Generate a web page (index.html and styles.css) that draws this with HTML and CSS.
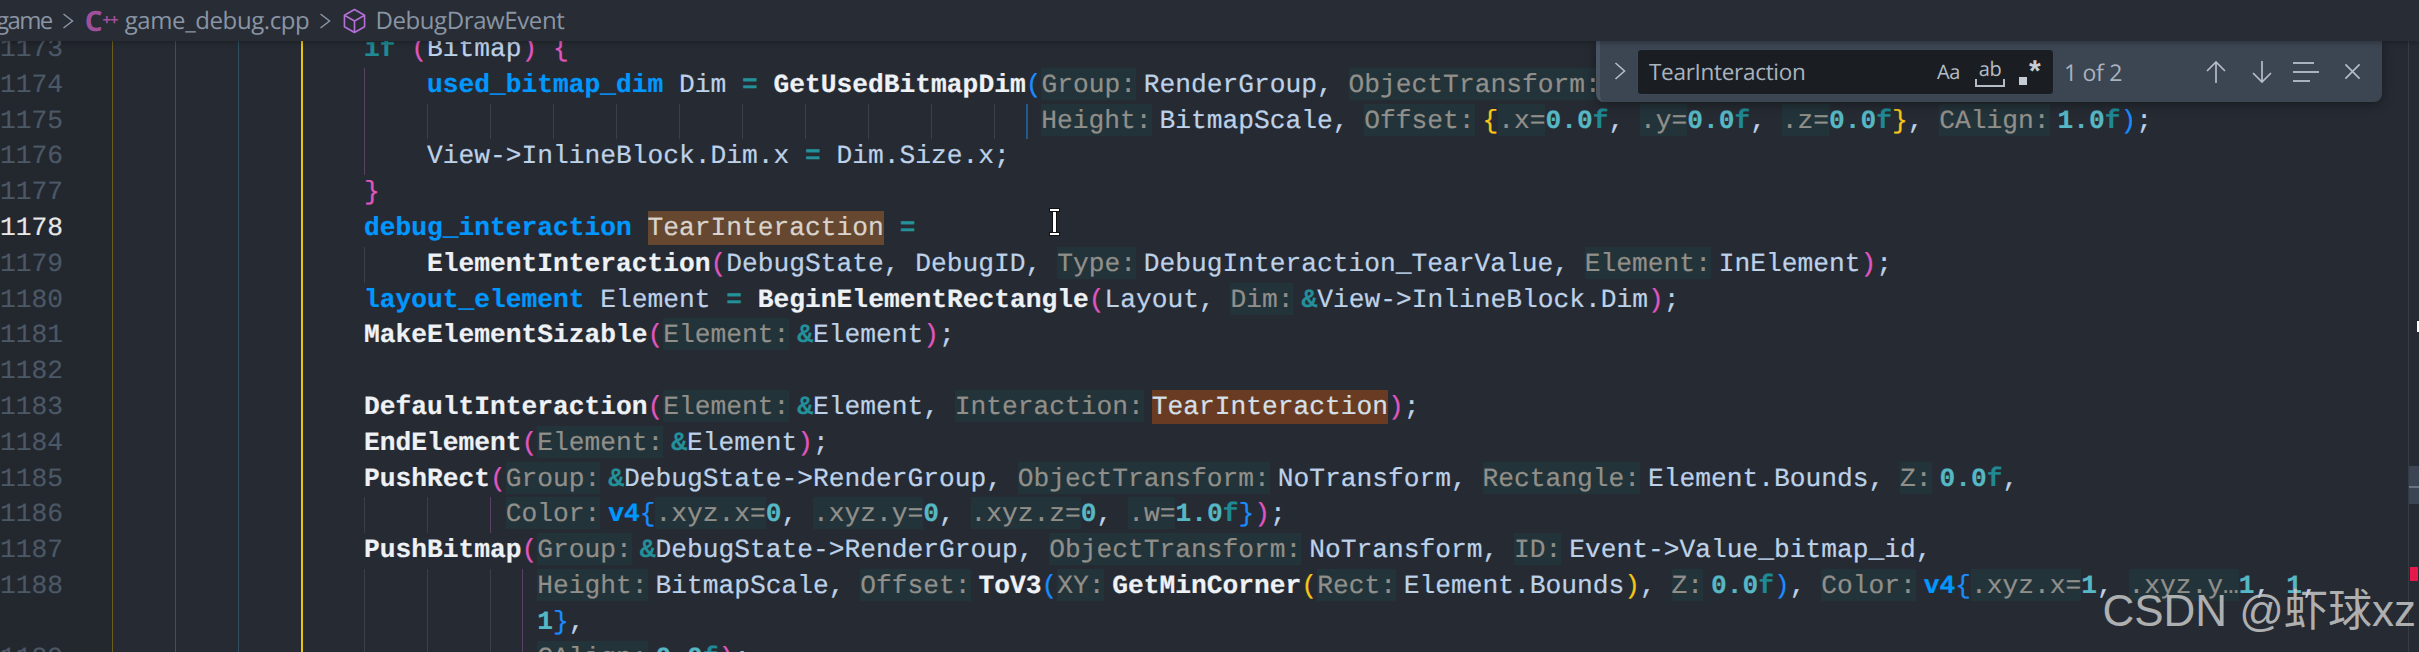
FILE: index.html
```html
<!DOCTYPE html>
<html lang="en">
<head>
<meta charset="utf-8">
<title>game_debug.cpp</title>
<link rel="stylesheet" href="styles.css">
</head>
<body>
<div class="app">
  <nav class="crumbs">
    <span class="crumb first">game</span>
    <svg class="sep" viewBox="0 0 12 16"><path d="M1.5 1 L10.5 8 L1.5 15"/></svg>
    <span class="cpp"><b>C</b><i>++</i></span>
    <span class="crumb">game_debug.cpp</span>
    <svg class="sep" viewBox="0 0 12 16"><path d="M1.5 1 L10.5 8 L1.5 15"/></svg>
    <svg class="cube" viewBox="0 0 24 27"><path d="M12 1.5 L22.5 7.5 V19.5 L12 25.5 L1.5 19.5 V7.5 Z M1.5 7.5 L12 13.5 L22.5 7.5 M12 13.5 V25.5"/></svg>
    <span class="crumb">DebugDrawEvent</span>
  </nav>
  <main class="editor">
    <div class="lines">
      <div class="row"><span class="num">1173</span><span class="ind"></span><span class="t"><span class="kw">if</span> <span class="pk">(</span>Bitmap<span class="pk">)</span> <span class="pk">{</span></span></div>
      <div class="row"><span class="num">1174</span><span class="ind"><i class="g pur"></i></span><span class="t"><b class="ty">used_bitmap_dim</b> Dim <b class="op">=</b> <b class="fn">GetUsedBitmapDim</b><span class="bl">(</span><span class="h c">Group:</span>RenderGroup, <span class="h c">ObjectTransform:</span></span></div>
      <div class="row"><span class="num">1175</span><span class="ind"><i class="g pur"></i><i class="g"></i><i class="g"></i><i class="g"></i><i class="g"></i><i class="g"></i><i class="g"></i><i class="g"></i><i class="g"></i><i class="g"></i><i class="g half"></i><i class="g q blu"></i></span><span class="t"><span class="h c">Height:</span>BitmapScale, <span class="h c">Offset:</span><span class="ye">{</span><span class="h">.x=</span><b class="n">0.0<u>f</u></b>, <span class="h">.y=</span><b class="n">0.0<u>f</u></b>, <span class="h">.z=</span><b class="n">0.0<u>f</u></b><span class="ye">}</span>, <span class="h c">CAlign:</span><b class="n">1.0<u>f</u></b><span class="bl">)</span>;</span></div>
      <div class="row"><span class="num">1176</span><span class="ind"><i class="g pur"></i></span><span class="t">View-&gt;InlineBlock.Dim.x <b class="op">=</b> Dim.Size.x;</span></div>
      <div class="row"><span class="num">1177</span><span class="ind"></span><span class="t"><span class="pk">}</span></span></div>
      <div class="row"><span class="num cur">1178</span><span class="ind"></span><span class="t"><b class="ty">debug_interaction</b> <span class="m">TearInteraction</span> <b class="op">=</b></span></div>
      <div class="row"><span class="num">1179</span><span class="ind"><i class="g"></i></span><span class="t"><b class="fn">ElementInteraction</b><span class="pk">(</span>DebugState, DebugID, <span class="h c">Type:</span>DebugInteraction_TearValue, <span class="h c">Element:</span>InElement<span class="pk">)</span>;</span></div>
      <div class="row"><span class="num">1180</span><span class="ind"></span><span class="t"><b class="ty">layout_element</b> Element <b class="op">=</b> <b class="fn">BeginElementRectangle</b><span class="pk">(</span>Layout, <span class="h c">Dim:</span><b class="op">&amp;</b>View-&gt;InlineBlock.Dim<span class="pk">)</span>;</span></div>
      <div class="row"><span class="num">1181</span><span class="ind"></span><span class="t"><b class="fn">MakeElementSizable</b><span class="pk">(</span><span class="h c">Element:</span><b class="op">&amp;</b>Element<span class="pk">)</span>;</span></div>
      <div class="row"><span class="num">1182</span><span class="ind"></span><span class="t"></span></div>
      <div class="row"><span class="num">1183</span><span class="ind"></span><span class="t"><b class="fn">DefaultInteraction</b><span class="pk">(</span><span class="h c">Element:</span><b class="op">&amp;</b>Element, <span class="h c">Interaction:</span><span class="m now">TearInteraction</span><span class="pk">)</span>;</span></div>
      <div class="row"><span class="num">1184</span><span class="ind"></span><span class="t"><b class="fn">EndElement</b><span class="pk">(</span><span class="h c">Element:</span><b class="op">&amp;</b>Element<span class="pk">)</span>;</span></div>
      <div class="row"><span class="num">1185</span><span class="ind"></span><span class="t"><b class="fn">PushRect</b><span class="pk">(</span><span class="h c">Group:</span><b class="op">&amp;</b>DebugState-&gt;RenderGroup, <span class="h c">ObjectTransform:</span>NoTransform, <span class="h c">Rectangle:</span>Element.Bounds, <span class="h c">Z:</span><b class="n">0.0<u>f</u></b>,</span></div>
      <div class="row"><span class="num">1186</span><span class="ind"><i class="g"></i><i class="g"></i><i class="g q pur"></i></span><span class="t"><span class="h c">Color:</span><b class="ty">v4</b><span class="bl">{</span><span class="h">.xyz.x=</span><b class="n">0</b>, <span class="h">.xyz.y=</span><b class="n">0</b>, <span class="h">.xyz.z=</span><b class="n">0</b>, <span class="h">.w=</span><b class="n">1.0<u>f</u></b><span class="bl">}</span><span class="pk">)</span>;</span></div>
      <div class="row"><span class="num">1187</span><span class="ind"></span><span class="t"><b class="fn">PushBitmap</b><span class="pk">(</span><span class="h c">Group:</span><b class="op">&amp;</b>DebugState-&gt;RenderGroup, <span class="h c">ObjectTransform:</span>NoTransform, <span class="h c">ID:</span>Event-&gt;Value_bitmap_id,</span></div>
      <div class="row"><span class="num">1188</span><span class="ind"><i class="g"></i><i class="g"></i><i class="g half"></i><i class="g q pur"></i></span><span class="t"><span class="h c">Height:</span>BitmapScale, <span class="h c">Offset:</span><b class="fn">ToV3</b><span class="bl">(</span><span class="h c">XY:</span><b class="fn">GetMinCorner</b><span class="ye">(</span><span class="h c">Rect:</span>Element.Bounds<span class="ye">)</span>, <span class="h c">Z:</span><b class="n">0.0<u>f</u></b><span class="bl">)</span>, <span class="h c">Color:</span><b class="ty">v4</b><span class="bl">{</span><span class="h">.xyz.x=</span><b class="n">1</b>, <span class="h">.xyz.y…</span><b class="n">1</b>, <b class="n">1</b>,</span></div>
      <div class="row"><span class="num"></span><span class="ind"><i class="g"></i><i class="g"></i><i class="g half"></i><i class="g q pur"></i></span><span class="t"><b class="n">1</b><span class="bl">}</span>,</span></div>
      <div class="row"><span class="num">1189</span><span class="ind"><i class="g"></i><i class="g"></i><i class="g half"></i><i class="g q pur"></i></span><span class="t"><span class="h c">CAlign:</span><b class="n">0.0<u>f</u></b><span class="pk">)</span>;</span></div>
    </div>

    <section class="find">
      <svg class="toggle" viewBox="0 0 12 18"><path d="M1.5 1 L10.5 9 L1.5 17"/></svg>
      <div class="input">
        <span class="query">TearInteraction</span>
        <span class="opt aa">Aa</span>
        <span class="opt ab">ab</span>
        <span class="opt rx"><i></i>*</span>
      </div>
      <span class="count">1 of 2</span>
      <div class="actions">
        <svg viewBox="0 0 22 24"><path d="M11 23 V2 M2 11 L11 2 L20 11"/></svg>
        <svg viewBox="0 0 22 24"><path d="M11 1 V22 M2 13 L11 22 L20 13"/></svg>
        <svg viewBox="0 0 28 22"><path d="M1 2 H22 M1 11 H27 M1 20 H18"/></svg>
        <svg viewBox="0 0 18 18"><path d="M1.5 1.5 L16.5 16.5 M16.5 1.5 L1.5 16.5"/></svg>
      </div>
    </section>

    <div class="caret" aria-hidden="true"></div>
    <aside class="ruler">
      <span class="tick"></span>
      <span class="thumb"></span>
      <span class="mark"></span>
    </aside>
    <div class="watermark">CSDN @虾球xz</div>
  </main>
</div>
</body>
</html>
```

FILE: styles.css
```css
* { box-sizing: border-box; }
html, body { margin: 0; padding: 0; height: 100%; background: #262b33; overflow: hidden; }
.app { height: 652px; display: flex; flex-direction: column; }

.crumbs {
  height: 41px; flex: none; position: relative; z-index: 3;
  display: flex; align-items: center;
  background: #272c35; box-shadow: 0 2px 5px rgba(0,0,0,.25);
  font: 24px "Open Sans", sans-serif; color: #8a95a4;
  text-rendering: geometricPrecision;
}
.crumb { white-space: nowrap; letter-spacing: -.4px; }
.first { margin-left: -4px; letter-spacing: -1.6px; }
.sep { flex: none; width: 12px; height: 16px; margin: 0 11px 0 10px; fill: none; stroke: #8a95a4; stroke-width: 1.5; }
.cpp { flex: none; width: 40px; color: #a0509a; line-height: 1; display: flex; align-items: center; }
.cpp b { font-size: 28px; font-weight: 700; }
.cpp i { font-style: normal; font-weight: 700; font-size: 15px; letter-spacing: -1px; }
.cube { flex: none; width: 23px; height: 26px; margin-right: 9px; margin-left: 1px; fill: none; stroke: #b36fd6; stroke-width: 1.7; stroke-linejoin: round; }

.editor { flex: 1; position: relative; overflow: hidden; }
.lines {
  margin-top: -9px;
  font: 26.25px "Liberation Mono", monospace;
  text-rendering: geometricPrecision;
  -webkit-text-stroke: .2px;
  color: #bdd1e8;
  background:
    linear-gradient(#6d5c1e, #6d5c1e) 112px 0 / 1px 100% no-repeat,
    linear-gradient(#5c3f67, #5c3f67) 175px 0 / 1px 100% no-repeat,
    linear-gradient(#2f4f5e, #2f4f5e) 238px 0 / 1px 100% no-repeat,
    linear-gradient(#e8c40b, #e8c40b) 301px 0 / 2px 100% no-repeat;
}
.row { display: flex; height: 35.8px; line-height: 35.8px; }
.num { flex: none; width: 112px; padding-right: 50px; text-align: right; background: #23272e; color: #4b5866; }
.cur { color: #e8e8e8; }
.ind { flex: none; margin-left: 252px; display: flex; }
.g { display: block; flex: none; width: 63px; height: 100%; border-left: 1px solid #3a4049; }
.half { width: 31.5px; }
.q { width: 15.75px; }
.g.pur { border-left-color: #5a4263; }
.g.blu { border-left: 2px solid #1f5a8a; }
.t { flex: none; white-space: pre; }

b { font-weight: 700; }
.ty { color: #0098ff; }
.fn { color: #eef1f5; }
.op { color: #23909a; }
.kw { color: #1f8a94; font-weight: 700; }
.n { color: #56b8c4; }
.n u { color: #1f8a94; text-decoration: none; }
.pk { color: #e056c0; }
.bl { color: #1a8cff; }
.ye { color: #f5c518; }
.h {
  display: inline-block; height: 32px; line-height: 35px; vertical-align: baseline;
  background: #23333a; color: #918f8a;
}
.h.c { margin-right: 7.9px; }
.m { display: inline-block; height: 34.5px; background: #664831; color: #d9d4cd; }
.m.now { background: #683b22; color: #d5e0ea; }

.find {
  position: absolute; z-index: 2; top: 0; left: 1596px; width: 786px; height: 61px;
  display: flex; align-items: center;
  padding-left: 37px;
  background: #3c4552; border-left: 4px solid #4a5564;
  border-radius: 0 0 8px 8px;
  box-shadow: 0 2px 12px rgba(0,0,0,.4);
  font-family: "Open Sans", sans-serif; color: #b4bcc6;
  text-rendering: geometricPrecision;
}
.toggle { position: absolute; left: 14px; top: 21px; width: 12px; height: 18px; fill: none; stroke: #b4bcc6; stroke-width: 1.6; }
.input {
  width: 417px; height: 46px; margin-top: 0; flex: none;
  display: flex; align-items: center;
  padding-left: 11px;
  background: #1a1e23; border: 1px solid #3f4856; border-radius: 4px;
}
.query { font-size: 22.5px; color: #a9b3bf; width: 288px; letter-spacing: -.3px; }
.opt { font-size: 20px; color: #b4bcc6; }
.aa { width: 38px; letter-spacing: -.5px; }
.ab { position: relative; width: 30px; height: 30px; line-height: 24px; text-align: center; border: 2px solid #b4bcc6; border-top: 0; border-image: linear-gradient(transparent 75%, #b4bcc6 75%) 2; margin-right: 14px; letter-spacing: -.5px; }
.rx { position: relative; width: 24px; font: 700 30px/1 "Liberation Sans", sans-serif; padding-left: 10px; height: 30px; color: #c6ccd4; }
.rx i { position: absolute; left: 0; bottom: 2px; width: 8px; height: 8px; background: #c6ccd4; }
.count { margin-left: 10px; font-size: 23px; color: #aab2bd; width: 141px; letter-spacing: -.3px; }
.actions { display: flex; align-items: center; gap: 24px; }
.actions svg { display: block; flex: none; height: 24px; width: 22px; fill: none; stroke: #b4bcc6; stroke-width: 1.7; }
.actions svg:nth-child(3) { width: 28px; height: 22px; margin-left: -5px; stroke-width: 2.2; stroke: #aab2bd; }
.actions svg:nth-child(4) { width: 17px; height: 17px; margin-left: 0; stroke-width: 1.8; }

.caret { position: absolute; z-index: 2; left: 1053px; top: 168px; width: 3px; height: 26px; background: #fff; outline: 1px solid #111; }
.caret::before, .caret::after { content: ""; position: absolute; left: -3px; width: 9px; height: 2px; background: #fff; outline: 1px solid #111; }
.caret::before { top: 0; }
.caret::after { bottom: 0; }

.ruler { position: absolute; top: 0; right: 0; width: 11px; height: 100%; border-left: 1px solid #363c46; z-index: 1; }
.tick { position: absolute; top: 280px; right: 0; width: 2px; height: 11px; background: #fff; }
.thumb { position: absolute; top: 425px; left: 0; width: 100%; height: 38px; background: #3a4452; border-top: 0; }
.thumb::after { content: ""; position: absolute; left: 0; right: 0; top: 20px; height: 2px; background: #6a7480; }
.mark { position: absolute; top: 526px; left: 1px; width: 8px; height: 14px; background: #e5194a; }

.watermark {
  position: absolute; z-index: 4; right: 3px; bottom: 13px;
  font: 44px "Liberation Sans", "Noto Sans CJK SC", sans-serif;
  color: rgba(200,200,200,.85); white-space: nowrap;
}
```
